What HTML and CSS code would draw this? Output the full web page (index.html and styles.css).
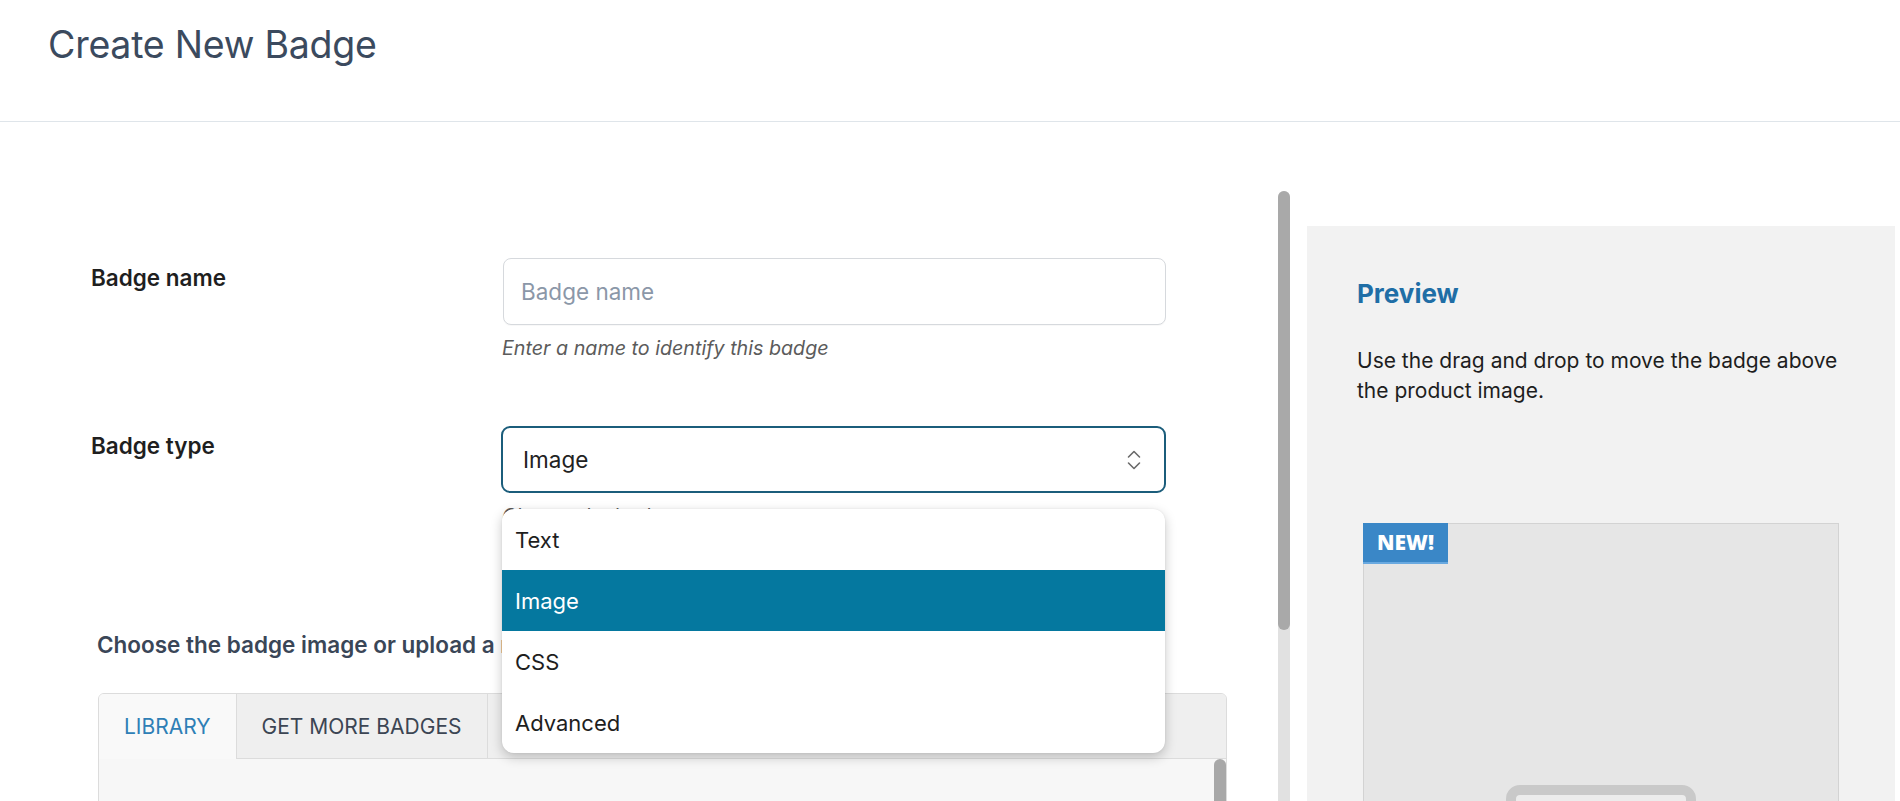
FILE: index.html
```html
<!DOCTYPE html>
<html lang="en">
<head>
<meta charset="utf-8">
<title>Create New Badge</title>
<link rel="stylesheet" href="styles.css">
</head>
<body>
<header class="page-header">
  <h1 class="page-title">Create New Badge</h1>
</header>
<div class="layout">
  <div class="form-col">
    <div class="form-row">
      <label class="form-label">Badge name</label>
      <div class="form-field">
        <input class="text-input" type="text" placeholder="Badge name">
        <div class="help">Enter a name to identify this badge</div>
      </div>
    </div>
    <div class="form-row form-row-second">
      <label class="form-label">Badge type</label>
      <div class="form-field select-field">
        <div class="select-box">
          <span>Image</span>
          <svg class="chevrons" width="14" height="22" viewBox="0 0 14 22"><path d="M1.5 8 L7 2.5 L12.5 8" fill="none" stroke="#6a6a6a" stroke-width="1.6" stroke-linecap="round" stroke-linejoin="round"/><path d="M1.5 14 L7 19.5 L12.5 14" fill="none" stroke="#6a6a6a" stroke-width="1.6" stroke-linecap="round" stroke-linejoin="round"/></svg>
        </div>
        <div class="help">Choose the badge type</div>
        <ul class="dropdown">
          <li class="option">Text</li>
          <li class="option option-active">Image</li>
          <li class="option">CSS</li>
          <li class="option">Advanced</li>
        </ul>
      </div>
    </div>
    <section class="image-section">
      <h3 class="section-title">Choose the badge image or upload a new one</h3>
      <div class="tabs">
        <div class="tab-bar">
          <div class="tab tab-active">LIBRARY</div>
          <div class="tab">GET MORE BADGES</div>
        </div>
        <div class="tab-body">
          <div class="inner-thumb"></div>
        </div>
      </div>
    </section>
  </div>
  <div class="scroll-track"><div class="scroll-thumb"></div></div>
  <aside class="preview">
    <h2 class="preview-title">Preview</h2>
    <p class="preview-text">Use the drag and drop to move the badge above the product image.</p>
    <div class="preview-box">
      <div class="new-badge">NEW!</div>
      <div class="placeholder-icon"></div>
    </div>
  </aside>
</div>
</body>
</html>
```
FILE: styles.css
```css
* { box-sizing: border-box; }
html, body { margin: 0; padding: 0; }
body {
  font-family: Inter, "Noto Sans", "Liberation Sans", sans-serif;
  background: #ffffff;
  color: #1e1e1e;
  width: 1900px;
  height: 801px;
  overflow: hidden;
}

.page-header {
  height: 122px;
  border-bottom: 1px solid #dfe5ea;
}
.page-title {
  margin: 0;
  padding: 22px 0 0 48px;
  font-size: 37.5px;
  line-height: 46px;
  font-weight: 400;
  color: #3b4a5e;
  letter-spacing: -0.25px;
}

.layout {
  display: flex;
  height: 679px;
  overflow: hidden;
}

.form-col {
  flex: none;
  width: 1278px;
  padding-top: 136px;
}
.form-row {
  display: flex;
  padding-left: 91px;
}
.form-row-second { margin-top: 66px; }
.form-label {
  flex: none;
  width: 410px;
  margin-top: 6px;
  font-size: 22.5px;
  line-height: 28px;
  font-weight: 600;
  color: #1f1f1f;
}
.form-field {
  flex: none;
  width: 665px;
}
.select-field { position: relative; }

.text-input {
  display: block;
  width: 663px;
  margin-left: 2px;
  height: 67px;
  border: 1px solid #d6d9dd;
  border-radius: 8px;
  padding: 0 17px;
  font-family: inherit;
  font-size: 22.5px;
  color: #1e1e1e;
  background: #fff;
  outline: none;
  box-shadow: 0 1px 1px rgba(0,0,0,0.03);
}
.text-input::placeholder { color: #8b97a8; }

.help {
  margin-top: 11px;
  margin-left: 1px;
  font-size: 19.7px;
  line-height: 24px;
  font-style: italic;
  color: #5b5b5b;
}

.select-box {
  height: 67px;
  border: 2px solid #1b5d7b;
  border-radius: 9px;
  padding: 0 23px 0 20px;
  display: flex;
  align-items: center;
  justify-content: space-between;
  font-size: 22.5px;
  color: #222;
  background: #fff;
}
.chevrons { display: block; }

.dropdown {
  position: absolute;
  top: 83px;
  left: 1px;
  width: 663px;
  margin: 0;
  padding: 0;
  list-style: none;
  background: #ffffff;
  border-radius: 12px;
  overflow: hidden;
  box-shadow: 0 4px 12px rgba(0,0,0,0.22), 0 0 2px rgba(0,0,0,0.08);
  z-index: 5;
}
.option {
  height: 61px;
  display: flex;
  align-items: center;
  padding-left: 13px;
  font-size: 22px;
  color: #1e1e1e;
}
.option-active {
  background: #05789f;
  color: #ffffff;
}

.image-section {
  margin-top: 103px;
  padding-left: 97px;
}
.section-title {
  margin: 0 0 34px;
  font-size: 22.5px;
  line-height: 28px;
  font-weight: 600;
  color: #3a4657;
}
.tabs {
  margin-left: 1px;
  width: 1129px;
  height: 220px;
  border: 1px solid #dcdcdc;
  border-radius: 6px 6px 0 0;
  background: #f7f7f7;
  overflow: hidden;
}
.tab-bar {
  display: flex;
  height: 65px;
  background: #efefef;
  border-bottom: 1px solid #dcdcdc;
}
.tab {
  display: flex;
  align-items: center;
  padding: 0 25px;
  border-right: 1px solid #dcdcdc;
  font-size: 21px;
  color: #3c4553;
}
.tab-active {
  background: #f9f9f9;
  color: #2f7fb6;
  height: 65px;
  margin-bottom: -1px;
}
.tab-body {
  display: flex;
  justify-content: flex-end;
  height: 150px;
}
.inner-thumb {
  width: 12px;
  height: 140px;
  background: #a8a8a8;
  border-radius: 6px 6px 0 0;
}

.scroll-track {
  flex: none;
  width: 12px;
  margin-top: 69px;
  height: 620px;
  background: #e1e1e1;
  border-radius: 6px 6px 0 0;
}
.scroll-thumb {
  height: 439px;
  background: #a9a9a9;
  border-radius: 6px;
}

.preview {
  flex: none;
  width: 588px;
  margin-left: 17px;
  margin-top: 104px;
  background: #f2f2f2;
  padding: 53px 0 0 50px;
}
.preview-title {
  margin: 0;
  font-size: 26px;
  line-height: 30px;
  font-weight: 700;
  color: #1f6ea6;
}
.preview-text {
  margin: 37px 0 0;
  width: 505px;
  font-size: 21px;
  line-height: 30px;
  color: #1e1e1e;
}
.preview-box {
  position: relative;
  margin: 117px 0 0 6px;
  width: 476px;
  height: 420px;
  border: 1px solid #d3d3d3;
  background: #e6e6e6;
  padding-top: 261px;
}
.new-badge {
  position: absolute;
  top: -1px;
  left: -1px;
  width: 85px;
  height: 41px;
  background: #3a87c7;
  border-bottom: 2px solid #69a9e0;
  color: #ffffff;
  font-family: "Open Sans", Inter, sans-serif;
  font-weight: 800;
  font-size: 21px;
  line-height: 39px;
  text-align: center;
}
.placeholder-icon {
  width: 190px;
  height: 150px;
  margin: 0 auto;
  border: 10px solid #c9c9c9;
  border-radius: 14px;
  background: #ececec;
}
```
